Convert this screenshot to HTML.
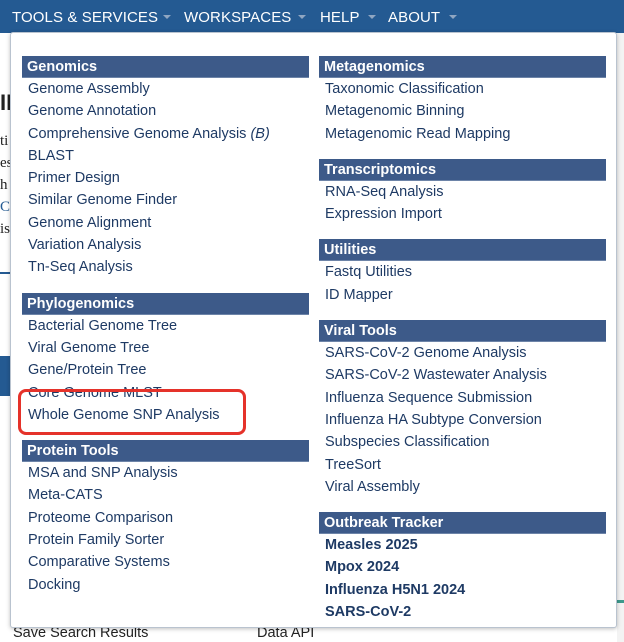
<!DOCTYPE html>
<html><head><meta charset="utf-8"><style>
*{margin:0;padding:0;box-sizing:border-box}
body{width:624px;height:642px;overflow:hidden;background:#fff;font-family:"Liberation Sans",Arial,sans-serif;position:relative}
.nav{position:absolute;left:0;top:0;width:624px;height:33px;background:#245a92;color:#fff;font-size:15px}
.nav span{position:absolute;top:9px;letter-spacing:0.1px}
.car{position:absolute;top:15px;width:0;height:0;border-left:4px solid transparent;border-right:4px solid transparent;border-top:4px solid #8fa6c2}
.bg{position:absolute;color:#222;font-family:"Liberation Serif",serif;font-size:15px}
.panel{position:absolute;left:10px;top:32px;width:607px;height:596px;background:#fff;border:1px solid #b9c3cf;border-radius:3px;box-shadow:0 1px 4px rgba(0,0,0,.25)}
.col{position:absolute;top:23px;width:287px}
.h{height:22px;background:#3d5a89;color:#fff;font-weight:bold;font-size:14.5px;line-height:22px;padding-left:5px;border-bottom:1px solid #6d84a8}
.i{height:22.3px;line-height:22.3px;font-size:14.5px;color:#1e3a64;padding-left:6px;white-space:nowrap}
.b{font-weight:bold}
.gap{height:14px}
.red{position:absolute;left:18px;top:389px;width:228px;height:46px;border:3px solid #e5322a;border-radius:8px}
</style></head><body>
<div class="bg" style="left:0;top:90px;font-size:22px;font-weight:bold;font-family:'Liberation Sans',sans-serif">II</div>
<div class="bg" style="left:0;top:130px;line-height:22px">ti<br>es<br>h<br><span style="color:#245a92">C</span><br>is</div>
<div style="position:absolute;left:0;top:272px;width:10px;height:2px;background:#245a92"></div>
<div style="position:absolute;left:0;top:356px;width:10px;height:40px;background:#245a92"></div>
<div class="bg" style="left:13px;top:625px;font-family:'Liberation Sans',sans-serif;font-size:14.5px">Save Search Results</div>
<div class="bg" style="left:257px;top:625px;font-family:'Liberation Sans',sans-serif;font-size:14.5px">Data API</div>
<div style="position:absolute;left:617px;top:0;width:7px;height:642px;background:#f3f3f3"></div>
<div style="position:absolute;left:617px;top:600px;width:7px;height:3px;background:#3c9a8d"></div>
<div class="nav">
<span style="left:12px">TOOLS &amp; SERVICES</span><i class="car" style="left:163px"></i>
<span style="left:184px">WORKSPACES</span><i class="car" style="left:298px"></i>
<span style="left:320px">HELP</span><i class="car" style="left:368px"></i>
<span style="left:388px">ABOUT</span><i class="car" style="left:449px"></i>
</div>
<div class="panel">
<div class="col" style="left:11px">
<div class="h">Genomics</div>
<div class="i">Genome Assembly</div>
<div class="i">Genome Annotation</div>
<div class="i">Comprehensive Genome Analysis <i>(B)</i></div>
<div class="i">BLAST</div>
<div class="i">Primer Design</div>
<div class="i">Similar Genome Finder</div>
<div class="i">Genome Alignment</div>
<div class="i">Variation Analysis</div>
<div class="i">Tn-Seq Analysis</div>
<div class="gap"></div>
<div class="h">Phylogenomics</div>
<div class="i">Bacterial Genome Tree</div>
<div class="i">Viral Genome Tree</div>
<div class="i">Gene/Protein Tree</div>
<div class="i">Core Genome MLST</div>
<div class="i">Whole Genome SNP Analysis</div>
<div class="gap"></div>
<div class="h">Protein Tools</div>
<div class="i">MSA and SNP Analysis</div>
<div class="i">Meta-CATS</div>
<div class="i">Proteome Comparison</div>
<div class="i">Protein Family Sorter</div>
<div class="i">Comparative Systems</div>
<div class="i">Docking</div>
</div>
<div class="col" style="left:308px">
<div class="h">Metagenomics</div>
<div class="i">Taxonomic Classification</div>
<div class="i">Metagenomic Binning</div>
<div class="i">Metagenomic Read Mapping</div>
<div class="gap"></div>
<div class="h">Transcriptomics</div>
<div class="i">RNA-Seq Analysis</div>
<div class="i">Expression Import</div>
<div class="gap"></div>
<div class="h">Utilities</div>
<div class="i">Fastq Utilities</div>
<div class="i">ID Mapper</div>
<div class="gap"></div>
<div class="h">Viral Tools</div>
<div class="i">SARS-CoV-2 Genome Analysis</div>
<div class="i">SARS-CoV-2 Wastewater Analysis</div>
<div class="i">Influenza Sequence Submission</div>
<div class="i">Influenza HA Subtype Conversion</div>
<div class="i">Subspecies Classification</div>
<div class="i">TreeSort</div>
<div class="i">Viral Assembly</div>
<div class="gap"></div>
<div class="h">Outbreak Tracker</div>
<div class="i b">Measles 2025</div>
<div class="i b">Mpox 2024</div>
<div class="i b">Influenza H5N1 2024</div>
<div class="i b">SARS-CoV-2</div>
</div>
</div>
<div class="red"></div>
</body></html>
